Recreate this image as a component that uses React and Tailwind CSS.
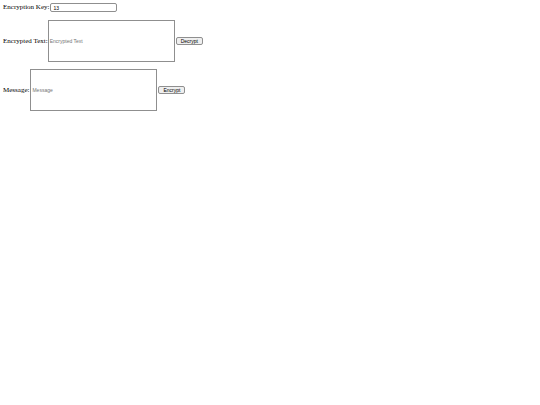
export default function App() {
  return (
    <div className="min-h-[405px] bg-white p-[3px] font-['Liberation_Serif',serif] text-[7px] text-black">
      <div className="flex h-[9px] items-center">
        <label className="leading-[9px]">Encryption Key:</label>
        <input
          defaultValue="13"
          className="ml-[1px] h-[9px] w-[67px] rounded-[2px] border border-[#8f8f8f] px-[2px] font-['Liberation_Sans',sans-serif] text-[5px] outline-none"
        />
      </div>
      <div className="mt-[8px] flex items-center">
        <label>Encrypted Text:</label>
        <textarea
          placeholder="Encrypted Text"
          className="h-[42px] w-[127px] resize-none border border-[#8f8f8f] px-[1px] pt-[17px] font-['Liberation_Sans',sans-serif] text-[5px] leading-[6px] outline-none placeholder:text-[#757575]"
        />
        <button className="ml-[1px] h-[8px] rounded-[2px] border border-[#8f8f8f] bg-[#efefef] px-[4px] font-['Liberation_Sans',sans-serif] text-[5px] leading-none">
          Decrypt
        </button>
      </div>
      <div className="mt-[7px] flex items-center">
        <label>Message:</label>
        <textarea
          placeholder="Message"
          className="ml-[1px] h-[42px] w-[127px] resize-none border border-[#8f8f8f] px-[1px] pt-[17px] font-['Liberation_Sans',sans-serif] text-[5px] leading-[6px] outline-none placeholder:text-[#757575]"
        />
        <button className="ml-[1px] h-[8px] rounded-[2px] border border-[#8f8f8f] bg-[#efefef] px-[4px] font-['Liberation_Sans',sans-serif] text-[5px] leading-none">
          Encrypt
        </button>
      </div>
    </div>
  );
}
